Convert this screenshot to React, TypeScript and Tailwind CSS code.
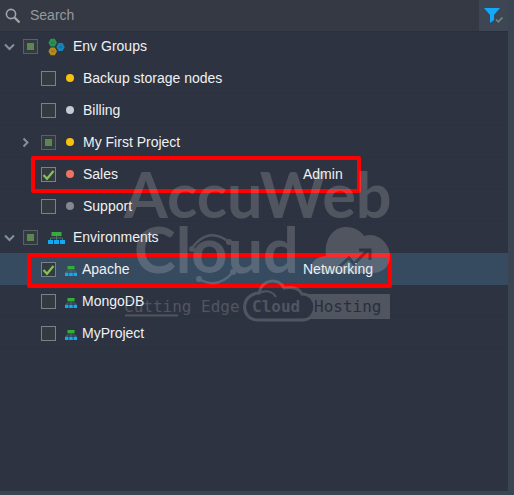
import { useEffect, useRef, useState } from 'react';
import clsx from 'clsx';

type CheckState = 'on' | 'off' | 'partial';

interface Item {
  id: string;
  name: string;
  state: CheckState;
  dot?: string;
  note?: string;
  expandable?: boolean;
  selected?: boolean;
  outline?: string;
}

const groups: Item[] = [
  { id: 'backup', name: 'Backup storage nodes', state: 'off', dot: 'bg-[#f5c211]' },
  { id: 'billing', name: 'Billing', state: 'off', dot: 'bg-[#c5cad3]' },
  { id: 'first', name: 'My First Project', state: 'partial', dot: 'bg-[#f5c211]', expandable: true },
  { id: 'sales', name: 'Sales', state: 'on', dot: 'bg-[#ee7363]', note: 'Admin', outline: 'left-[31px] w-[330px] -top-0.5 h-[37px]' },
  { id: 'support', name: 'Support', state: 'off', dot: 'bg-[#84898f]' },
];

const environments: Item[] = [
  { id: 'apache', name: 'Apache', state: 'on', note: 'Networking', selected: true, outline: 'left-[27px] w-[365px] top-0 h-[35px]' },
  { id: 'mongodb', name: 'MongoDB', state: 'off' },
  { id: 'myproject', name: 'MyProject', state: 'off' },
];

function TreeCheckbox({ id, initial }: { id: string; initial: CheckState }) {
  const [state, setState] = useState(initial);
  const ref = useRef<HTMLInputElement>(null);

  useEffect(() => {
    if (ref.current) ref.current.indeterminate = state === 'partial';
  }, [state]);

  return (
    <span className="grid shrink-0 place-items-center">
      <input
        ref={ref}
        id={id}
        type="checkbox"
        checked={state === 'on'}
        onChange={() => setState(state === 'on' ? 'off' : 'on')}
        className={clsx(
          'col-start-1 row-start-1 size-[15px] appearance-none border bg-[#333a40]',
          state === 'partial' ? 'border-[#596069]' : 'border-[#7b818a]',
        )}
      />
      {state === 'partial' && <span className="pointer-events-none col-start-1 row-start-1 size-[7px] bg-[#5d8752]" />}
      {state === 'on' && (
        <svg viewBox="0 0 15 15" className="pointer-events-none col-start-1 row-start-1 size-[15px]">
          <path d="M2.5 8 L6 11.8 L12.5 4" fill="none" stroke="#83c455" strokeWidth="2.2" />
        </svg>
      )}
    </span>
  );
}

function Chevron({ open }: { open: boolean }) {
  return (
    <svg viewBox="0 0 11 11" className="size-[11px]" fill="none" stroke="#8490a2" strokeWidth="2">
      <path d={open ? 'M1 3.5 5.5 8 10 3.5' : 'M3.5 1.5 7.5 5.5 3.5 9.5'} />
    </svg>
  );
}

function GroupsIcon() {
  return (
    <svg viewBox="0 0 17 18" className="h-[18px] w-[17px] shrink-0">
      <path d="M2.6 .8H6.8L9 4.7 6.8 8.6H2.6L.4 4.7Z" fill="#2b9150" />
      <path d="M10.5 5H14.6L16.8 9 14.6 13H10.5L8.3 9Z" fill="#1883b8" />
      <path d="M2.6 9.4H6.8L9 13.3 6.8 17.2H2.6L.4 13.3Z" fill="#b58a20" />
      <path d="M3 4.7H6.4M10.9 9H14.3M3 13.3H6.4" stroke="#2d3443" strokeOpacity=".25" strokeWidth="1.5" />
    </svg>
  );
}

function EnvIcon({ className }: { className: string }) {
  return (
    <svg viewBox="0 0 17 12" preserveAspectRatio="none" className={clsx('shrink-0', className)}>
      <path d="M8.5 4V8M2.5 9V6H14.5V9" fill="none" stroke="#56705f" strokeWidth="1" />
      <rect x="3.5" width="10" height="4" fill="#35ad3d" />
      <path d="M0 8H5V12H0ZM6 8H11V12H6ZM12 8H17V12H12Z" fill="#0fa9f5" />
    </svg>
  );
}

function HeaderRow({ id, name, kind }: { id: string; name: string; kind: 'groups' | 'envs' }) {
  return (
    <div className="flex h-[31px] items-center pl-1">
      <button type="button" aria-label={`Collapse ${name}`} className="mr-2">
        <Chevron open />
      </button>
      <TreeCheckbox id={id} initial="partial" />
      <label htmlFor={id} className="flex items-center">
        <span className="ml-2.5 flex w-[25px]">
          {kind === 'groups' ? <GroupsIcon /> : <EnvIcon className="h-3 w-[17px]" />}
        </span>
        {name}
      </label>
    </div>
  );
}

function ItemRow({ item }: { item: Item }) {
  return (
    <div className={clsx('relative flex h-8 items-center', item.selected ? 'bg-[#374b60]' : 'shadow-[inset_0_-1px_#2a323d]')}>
      <div className="flex w-[303px] shrink-0 items-center pl-5">
        <span className="flex w-[21px]">
          {item.expandable && (
            <button type="button" aria-label={`Expand ${item.name}`}>
              <Chevron open={false} />
            </button>
          )}
        </span>
        <TreeCheckbox id={item.id} initial={item.state} />
        <label htmlFor={item.id} className="flex items-center">
          {item.dot ? (
            <span className={clsx('mr-[9px] ml-2.5 size-2 rounded-full', item.dot)} />
          ) : (
            <EnvIcon className="mt-1 mr-[5px] ml-[9px] h-2.5 w-3" />
          )}
          {item.name}
        </label>
      </div>
      {item.note && <span>{item.note}</span>}
      {item.outline && <span className={clsx('pointer-events-none absolute rounded-xs border-4 border-[#ff0000]', item.outline)} />}
    </div>
  );
}

function Watermark() {
  return (
    <svg
      viewBox="0 0 280 155"
      className="pointer-events-none absolute top-[170px] left-[122px] h-[155px] w-[280px] opacity-20"
      fill="#dcdcdc"
    >
      <g fontFamily="Lato, sans-serif" fontWeight="700" fontSize="63">
        <text x="2" y="48">AccuWeb</text>
        <text x="12" y="103">Cloud</text>
      </g>
      <path d="M70 78Q86 56 107 72M77 109Q96 120 111 102" fill="none" stroke="#dcdcdc" strokeWidth="2.5" />
      <circle cx="70" cy="79" r="3" />
      <circle cx="107" cy="72" r="3" />
      <circle cx="77" cy="109" r="3" />
      <circle cx="111" cy="102" r="3" />
      <path d="M197 103C187 103 186 87 204 86C202 68 212 57 224 57C233 57 240 62 242 66C257 61 268 75 268 86C268 97 260 103 250 103Z" />
      <path d="M216 98 227 88 232 94 246 80M237 80H248V90" fill="none" stroke="#2d3443" strokeWidth="3" />
      <g fontFamily="DejaVu Sans Mono, monospace" fontSize="16">
        <text x="2" y="142">Cutting Edge</text>
        <path d="M3 144.5H56V146.5H3Z" />
        <path d="M183 124H268V149H183Z" />
        <path
          d="M136 150C118 150 118 124 137 123C141 108 157 108 162 118C174 116 178 120 180 124C197 124 197 150 180 150Z"
          fill="#2d3443"
          stroke="#dcdcdc"
          strokeWidth="3"
        />
        <path d="M137 123C145 119 151 122 154 127" fill="none" stroke="#dcdcdc" strokeWidth="2" />
        <text x="130" y="142" fontWeight="700">Cloud</text>
        <text x="192" y="142" fill="#171d2b">Hosting</text>
      </g>
    </svg>
  );
}

export default function App() {
  return (
    <div className="flex min-h-screen flex-col border-r-[6px] border-b-4 border-[#3a4452] bg-[#2d3341] font-['Liberation_Sans',Arial,sans-serif] text-[14px] text-[#f0f1f3]">
      <div className="flex h-8 items-stretch border-b border-[#29303c] bg-[#343943]">
        <label htmlFor="search" aria-label="Search" className="flex w-[30px] items-center pl-[5px]">
          <svg viewBox="0 0 16 16" className="size-4" fill="none" stroke="#a0a4aa">
            <circle cx="6" cy="6" r="4.6" strokeWidth="1.6" />
            <path d="M9.5 9.5 14.5 14.5" strokeWidth="2.4" />
          </svg>
        </label>
        <input id="search" type="text" placeholder="Search" className="min-w-0 flex-1 bg-transparent outline-none placeholder:text-[#9699a0]" />
        <button type="button" aria-label="Filter" className="flex w-[29px] items-center justify-center bg-[#3e4654]">
          <svg viewBox="0 0 20 16" className="h-4 w-5">
            <path d="M0 0H16L10 7V12L6 15V7Z" fill="#12a8fb" />
            <path d="M12 11.5 14.3 13.8 18.5 9.5" fill="none" stroke="#6f8a80" strokeWidth="1.6" />
          </svg>
        </button>
      </div>

      <div className="relative -mt-px flex-1">
        <HeaderRow id="env-groups" name="Env Groups" kind="groups" />
        {groups.map((item) => <ItemRow key={item.id} item={item} />)}
        <HeaderRow id="environments" name="Environments" kind="envs" />
        {environments.map((item) => <ItemRow key={item.id} item={item} />)}
      </div>
      <Watermark />
    </div>
  );
}
